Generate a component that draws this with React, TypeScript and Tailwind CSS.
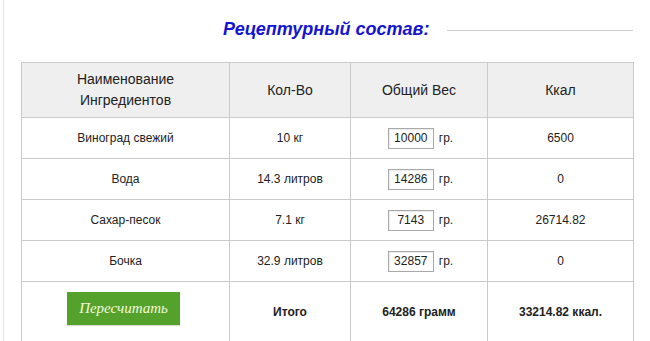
import { useState } from 'react'

type Row = { name: string; qty: string; weight: string; kcal: string }

const rows: Row[] = [
  { name: 'Виноград свежий', qty: '10 кг', weight: '10000', kcal: '6500' },
  { name: 'Вода', qty: '14.3 литров', weight: '14286', kcal: '0' },
  { name: 'Сахар-песок', qty: '7.1 кг', weight: '7143', kcal: '26714.82' },
  { name: 'Бочка', qty: '32.9 литров', weight: '32857', kcal: '0' },
]

export default function App() {
  const [values, setValues] = useState(rows.map(r => r.weight))

  return (
    <div className="h-[341px] w-[650px] overflow-hidden bg-white font-['Liberation_Sans',Arial,sans-serif] text-[#222]">
      <div className="ml-[3px] h-full border-l border-[#e6e6e6] pl-[17px]">
        {/* Title with trailing rule */}
        <div className="flex w-[612px] items-center pt-[18px] pl-[202px]">
          <h2 className="text-[18px] font-bold italic leading-[23px] text-[#1414d2]">Рецептурный состав:</h2>
          <div className="ml-[18px] mt-[2px] h-px flex-1 bg-[#cfcfcf]" />
        </div>

        <table className="mt-[21px] w-[612px] table-fixed border-collapse text-center">
          <colgroup>
            <col className="w-[208px]" />
            <col className="w-[121px]" />
            <col className="w-[137px]" />
            <col className="w-[146px]" />
          </colgroup>
          <thead>
            <tr className="h-[55px] bg-[#efefef] text-[14px] leading-[21px] text-[#222]">
              <th className="border border-[#cbcbcb] font-normal">
                Наименование
                <br />
                Ингредиентов
              </th>
              <th className="border border-[#cbcbcb] font-normal">Кол-Во</th>
              <th className="border border-[#cbcbcb] font-normal">Общий Вес</th>
              <th className="border border-[#cbcbcb] font-normal">Ккал</th>
            </tr>
          </thead>
          <tbody className="text-[12px]">
            {rows.map((r, i) => (
              <tr key={r.name} className="h-[41px]">
                <td className="border border-[#cbcbcb]">{r.name}</td>
                <td className="border border-[#cbcbcb]">{r.qty}</td>
                <td className="border border-[#cbcbcb]">
                  <div className="flex items-center justify-center gap-[5px] pl-[3px]">
                    <input
                      value={values[i]}
                      onChange={e => setValues(v => v.map((x, j) => (j === i ? e.target.value : x)))}
                      className="h-[21px] w-[46px] border border-[#a9a9a9] bg-white text-center text-[12px] text-[#222] shadow-[inset_1px_1px_1px_rgba(0,0,0,0.08)] outline-none"
                    />
                    <span>гр.</span>
                  </div>
                </td>
                <td className="border border-[#cbcbcb]">{r.kcal}</td>
              </tr>
            ))}
            <tr className="h-[60px] align-top">
              <td className="border border-[#cbcbcb] pt-[10px] pr-[4px]">
                <button className="h-[33px] w-[113px] bg-[#54a22c] font-['Liberation_Serif',serif] text-[15px] italic text-[#f4f8d8] shadow-[0_1px_1px_rgba(0,0,0,0.15)]">
                  Пересчитать
                </button>
              </td>
              <td className="border border-[#cbcbcb] pt-[21px] font-bold">Итого</td>
              <td className="border border-[#cbcbcb] pt-[21px] font-bold">64286 грамм</td>
              <td className="border border-[#cbcbcb] pt-[21px] font-bold">33214.82 ккал.</td>
            </tr>
          </tbody>
        </table>
      </div>
    </div>
  )
}
